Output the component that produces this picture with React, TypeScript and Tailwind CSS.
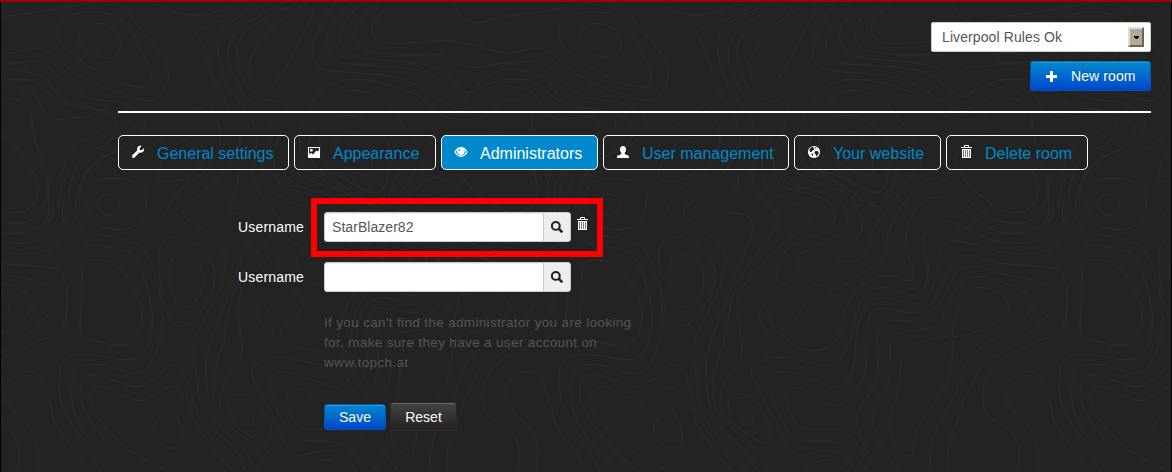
import React from "react";

type Pt = [number, number];

interface Contour {
  dx: number;
  dy: number;
  closed?: boolean;
  d: string;
}

// Contour points are stored at three times their drawn size; the pattern repeats every 1500 units.
const open = (dx: number, dy: number, list: string[]): Contour[] => list.map((d) => ({ dx, dy, d }));
const loops = (dx: number, dy: number, list: string[]): Contour[] =>
  list.map((d) => ({ dx, dy, d, closed: true }));

const contours: Contour[] = [
  ...loops(0, 0, [
    "237,110 255,80 300,71 345,90 362,130 348,165 320,173 275,160 242,135",
    "175,100 182,68 225,42 290,36 350,50 395,95 425,150 452,215 450,250 425,261 370,250 310,225 240,180 188,135",
    "1375,510 1420,570 1500,625 1550,638 1600,615 1612,560 1585,490 1540,430 1505,405 1440,410 1385,440 1365,480",
    "295,612 305,590 327,582 350,592 359,614 350,636 327,645 304,635",
    "255,600 270,555 330,535 400,545 437,572 435,630 410,675 345,688 280,665",
    "475,535 500,460 560,415 595,420 610,460 590,510 540,540",
    "960,440 970,380 1030,345 1100,365 1160,420 1165,520 1140,575 1080,560 990,500",
    "1000,430 1050,395 1100,430 1118,500 1110,525 1050,510 1000,470",
  ]),
  ...open(0, 0, [
    "1180,0 1125,60 1115,100 1140,122 1190,131 1320,122 1400,130 1470,150 1530,159 1580,148 1620,145 1660,165 1720,215 1790,255 1850,275 1900,292 1945,303 1975,290 2002,245 2002,195 1970,145 1920,85 1885,35 1845,10 1800,4 1720,18 1600,38 1500,52 1440,68 1400,60 1370,30 1355,0",
    "1150,0 1080,60 1065,110 1100,150 1200,165 1320,165 1370,190 1430,202 1500,190 1560,188 1610,185 1650,205 1690,245 1740,285 1800,300 1850,305 1900,325 1935,360 1930,395 1900,430 1830,460 1770,500 1735,570 1728,640 1750,690",
    "470,0 520,35 590,45 650,35 725,0",
    "780,0 700,50 620,80 590,100 605,130 625,180 640,235 680,310 710,370 720,420 705,470 680,510",
    "830,0 700,60 655,110 660,190 690,270 750,350 770,430 755,510",
    "870,0 740,70 690,130 690,200 730,280 800,350 820,400 790,460 785,510",
    "905,0 770,70 715,130 720,220 780,290 850,310 865,340 830,430 820,480 840,530 900,570",
    "930,0 820,80 765,150 747,200 760,240 800,265 830,240 870,180 920,80 955,0",
    "1010,0 960,80 937,150 955,200 1020,215 1150,225 1240,250 1320,300 1380,325 1440,310 1500,263 1550,262 1600,280 1630,330 1670,358 1730,352 1780,355 1803,380 1790,400 1720,440 1690,510 1675,600 1650,665",
    "1060,0 990,90 980,140 1010,185 1100,195 1220,205 1300,230 1380,290 1440,265 1490,243 1540,238 1600,245 1660,290 1720,320 1790,330 1840,355 1845,395 1820,430 1750,470 1715,540 1705,620 1680,690",
    "1095,0 1030,70 1020,120 1060,165 1150,180 1250,190 1320,210 1400,277 1440,250 1500,212 1580,215 1640,240 1690,300 1800,330 1870,350 1900,385 1890,420 1850,455 1780,490 1745,560 1735,640",
    "1645,670 1645,560 1625,480 1600,400 1590,330 1560,303 1530,297 1495,315 1450,350 1380,358 1320,340 1240,280 1100,240 1000,250 940,300 905,380 900,450 930,510 1040,580 1120,617",
    "1270,520 1250,440 1200,360 1150,300 1080,273 1020,280 970,330 930,420 935,480 1000,545 1085,590 1125,617",
    "430,450 480,420 560,350 615,315 640,330 660,400 650,460 610,520 540,570 490,650",
  ]),
  ...loops(300, 510, [
    "208,310 215,270 245,253 290,270 312,330 290,390 260,410 225,390",
    "178,290 180,230 210,203 260,208 320,250 345,310 330,380 290,440 245,470 210,450 185,370",
    "1060,498 1068,430 1085,375 1130,353 1190,365 1228,410 1200,450 1130,485",
    "1055,507 980,512 920,530 903,570 895,660 875,730 875,800 905,850 935,855 945,820 960,760 1010,690 1045,620",
  ]),
  ...open(300, 510, [
    "380,0 310,65 250,128 310,180 365,230 375,280 360,350 330,410 290,500 280,550 290,620 300,700 330,770 400,830 440,910",
    "420,0 410,50 387,120 410,130 445,140 458,170 445,220 410,300 380,390 345,480 320,560 320,640 335,720 370,780 430,840 480,910",
    "455,0 470,60 520,120 538,155 510,200 440,290 400,370 385,440 370,520 345,600 340,680 365,745 430,800 480,850 510,910",
    "485,0 500,50 560,90 620,115 638,140 610,175 550,220 480,290 430,350 415,400 420,480 425,550 400,595 370,650 360,700 375,745 440,790 500,840 535,910",
    "515,0 550,50 640,75 690,100 705,140 680,180 600,215 550,250 530,300 540,335 590,365 610,400 590,440 543,480 545,495 590,530 650,542 700,520 725,470 740,410 780,350 850,318 890,322 925,332 942,310 925,260 915,220 930,150 965,100 1010,82 1060,95 1130,150 1190,183 1250,190 1310,175 1350,130 1365,60 1385,0",
    "540,0 590,45 650,65 720,90 743,140 720,190 650,225 600,255 590,280 620,325 690,356 730,345 800,300 850,262 865,190 890,130 945,60 1005,22 1050,40 1110,95 1180,145 1250,160 1310,140 1340,80 1352,0",
    "575,0 640,35 740,70 775,120 785,180 750,225 715,262 730,273 780,265 808,220 825,165 900,70 945,0",
    "610,0 680,20 750,60 800,100 830,110 860,90 895,0",
    "650,0 720,20 780,55 825,68 855,50 865,0",
    "750,0 800,17 817,10 818,0",
    "600,858 570,840 530,760 480,670 455,610 470,580 540,562 640,580 700,585 745,530 765,440 800,370 850,352 890,360 935,377 970,360 985,300 972,240 975,190 1030,155 1080,165 1160,205 1250,220 1320,205 1370,150 1385,60 1405,0",
    "810,910 750,840 700,815 590,805 540,740 512,660 515,620 560,605 640,630 700,650 740,635 765,570 770,480 800,405 850,382 930,403 980,380 1010,310 1020,240 1050,213 1110,220 1190,243 1270,253 1350,235 1382,200 1390,100 1420,20",
    "835,910 760,810 710,778 630,780 590,760 562,700 565,665 600,655 660,690 710,705 750,680 790,620 800,560 800,480 815,425 850,415 930,428 980,415 1020,360 1050,290 1100,255 1200,280 1350,292 1390,320 1403,400 1380,480 1300,520 1200,575 1155,640 1150,700 1170,740 1230,780 1258,840 1255,910",
    "850,910 800,840 770,760 780,710 820,650 835,570 830,490 860,452 940,453 990,430 1030,380 1070,310 1120,288 1200,310 1300,330 1350,355 1360,400 1335,445 1250,520 1160,580 1110,650 1070,760 1045,830 1042,910",
    "900,910 850,840 818,760 830,700 870,620 870,530 900,490 1000,470 1040,420 1070,350 1120,320 1180,330 1260,358 1300,400 1260,460 1160,520 1100,580 1060,680 1005,790 985,910",
    "1312,910 1305,800 1250,735 1215,680 1225,635 1280,604 1320,625 1350,700 1370,770 1430,850 1450,910",
    "1075,0 1120,60 1200,115 1250,128 1300,105 1312,50 1300,0",
    "600,858 690,840 740,865 775,910",
    "605,910 640,882 690,870 745,910",
  ]),
  ...open(0, 708, [
    "700,708 640,640 590,560 560,490 520,454 480,465 430,493 370,480 310,453 275,470 280,520 330,590 400,650 510,708",
    "415,708 330,630 270,550 240,480 250,430 290,415 350,435 410,452 460,430 510,388 545,400 570,460 590,530 640,610 700,660 740,708",
    "370,708 290,640 230,550 213,460 230,400 280,385 340,395 400,412 445,390 480,310 488,230 465,110 430,40 370,10 290,-5",
    "300,708 240,600 190,520 178,430 190,375 240,355 320,362 380,372 430,350 457,260 440,150 400,60 340,35 270,25 235,0",
  ]),
  ...loops(0, 708, [
    "460,580 475,550 513,518 538,560 547,620 520,637 480,620",
    "243,200 250,90 275,73 330,78 380,120 420,200 425,260 400,315 350,328 280,312 243,290",
    "772,210 790,200 808,240 822,285 805,292 780,250",
    "725,545 740,533 760,550 758,568 735,560",
    "685,500 715,472 770,500 810,570 805,618 750,600 700,560",
  ]),
];

function toPath({ dx, dy, closed, d }: Contour): string {
  const p: Pt[] = d.split(" ").map((s) => {
    const [x, y] = s.split(",").map(Number);
    return [x + dx, y + dy];
  });
  const n = p.length;
  const at = (i: number): Pt => (closed ? p[(i + n) % n] : p[Math.max(0, Math.min(n - 1, i))]);
  let out = `M${p[0][0]} ${p[0][1]}`;
  for (let i = 0; i < (closed ? n : n - 1); i++) {
    const [a, b, c, e] = [at(i - 1), at(i), at(i + 1), at(i + 2)];
    out += `C${b[0] + (c[0] - a[0]) / 6} ${b[1] + (c[1] - a[1]) / 6} ${c[0] - (e[0] - b[0]) / 6} ${
      c[1] - (e[1] - b[1]) / 6
    } ${c[0]} ${c[1]}`;
  }
  return out;
}

const terrain = contours.map(toPath).join("");

function Terrain() {
  return (
    <svg
      className="pointer-events-none absolute inset-0 h-full w-full"
      viewBox="0 0 3516 1416"
      fill="none"
      stroke="#2c2c2c"
      strokeWidth="3"
      aria-hidden="true"
    >
      <defs>
        <path id="terrain" d={terrain} />
      </defs>
      <use href="#terrain" x="-1500" />
      <use href="#terrain" />
      <use href="#terrain" x="1500" />
      <use href="#terrain" x="3000" />
    </svg>
  );
}

type IconName = "wrench" | "picture" | "eye" | "user" | "globe" | "trash" | "search" | "plus";

const glyphs: Record<IconName, React.ReactNode> = {
  wrench: (
    <path d="M12.8 3.3 10.7 5.3 9 4.9 8.7 3.3 10.7 1.1C9.2.5 7.5.9 6.7 2.1 6 3.1 6 4.3 6.3 5.3L1.3 10.2C.8 10.8.8 11.8 1.3 12.4 1.9 13.1 3 13.1 3.6 12.5L8.4 7.6C9.7 8 11.2 7.7 12.1 6.7 13 5.8 13.3 4.4 12.8 3.3Z" />
  ),
  picture: (
    <path fillRule="evenodd" d="M1 2h12v11H1ZM2 3v6l1-.6L4.500 8 6 9.400 9.300 5.400 10.600 6.600 12 5V3ZM3 4h2.600v2.600H3Z" />
  ),
  eye: (
    <path
      fillRule="evenodd"
      d="M.3 7.1C1.8 3.8 4.2 2 7 2s5.200 1.800 6.700 5.100C12.200 10.200 9.800 12 7 12S1.800 10.200.3 7.100ZM1.900 7C3 9.400 4.800 10.600 7 10.600S11 9.400 12.100 7C11.600 6 11 5.200 10.200 4.500 10.600 5.100 10.800 5.700 10.800 6.400 10.800 8.500 9.100 10 7 10S3.200 8.500 3.200 6.400C3.200 5.700 3.400 5.100 3.800 4.500 3 5.200 2.400 6 1.900 7ZM5.300 4.300C4.800 5 4.700 5.500 4.800 6.300L5.700 6.300C5.700 5.500 6 5 6.500 4.600Z"
    />
  ),
  user: (
    <path d="M7 1C8.900 1 10 2.300 10 4.200 10 5.600 9.500 6.800 8.800 7.500V9.200L12.200 10.600C12.800 10.900 13 11.500 13 13H1C1 11.500 1.200 10.900 1.800 10.600L5.200 9.200V7.500C4.500 6.800 4 5.600 4 4.200 4 2.300 5.100 1 7 1Z" />
  ),
  globe: (
    <>
      <circle cx="7" cy="7" r="6.1" />
      <path
        fill="#232323"
        d="M3.200 3.300 5 2l1.800.1-.6 1.100 1.200.3-.4 1.200-1.500.7-.3 1.200L3.500 7 2.300 5.900ZM8.200 2.100l1.700.6-.8.9-1-.4ZM8 6.200l2.600-.2 1.300 1.200-.8 2.300-1.700 1.900-.9-2.300-1.300-1ZM4.500 8.200l1.700.9-.3 2.100-1-.6Z"
      />
    </>
  ),
  trash: (
    <>
      <path fillRule="evenodd" d="M6 0h3a1 1 0 0 1 1 1v1h3v1H2V2h3V1a1 1 0 0 1 1-1ZM6 1v1h3V1Z" />
      <path fillRule="evenodd" d="M3 4h9v9H3ZM4 5v7h1V5ZM6 5v7h1V5ZM8 5v7h1V5ZM10 5v7h1V5Z" />
      <path fillOpacity=".4" d="M4 5h1v7H4ZM6 5h1v7H6ZM8 5h1v7H8ZM10 5h1v7h-1Z" />
    </>
  ),
  search: (
    <>
      <circle cx="4.800" cy="5.900" r="3.900" fill="none" stroke="currentColor" strokeWidth="2.100" />
      <path d="m7.700 8.700 3.600 3.600" stroke="currentColor" strokeWidth="2.600" />
    </>
  ),
  plus: <path d="M5 2h3v4h4v3H8v4H5V9H1V6h4Z" />,
};

function Icon({ name, className = "" }: { name: IconName; className?: string }) {
  return (
    <svg
      className={`block h-[14px] w-[14px] shrink-0 ${className}`}
      viewBox="0 0 14 14"
      fill="currentColor"
      aria-hidden="true"
    >
      {glyphs[name]}
    </svg>
  );
}

const tabs: { label: string; icon: IconName; width: string; active?: boolean }[] = [
  { label: "General settings", icon: "wrench", width: "w-[171px]" },
  { label: "Appearance", icon: "picture", width: "w-[142px]" },
  { label: "Administrators", icon: "eye", width: "w-[157px]", active: true },
  { label: "User management", icon: "user", width: "w-[186px]" },
  { label: "Your website", icon: "globe", width: "w-[147px]" },
  { label: "Delete room", icon: "trash", width: "w-[142px]" },
];

function UserField({ value }: { value: string }) {
  return (
    <div className="flex h-[30px] w-[247px]">
      <input
        aria-label="Username"
        defaultValue={value}
        className="h-[30px] w-[220px] rounded-l-[3px] border border-[#ccc] bg-white px-[7px] text-sm tracking-[0.05px] text-[#555] shadow-[inset_0_1px_1px_rgba(0,0,0,0.075)] outline-none"
      />
      <button
        aria-label="Search"
        className="-ml-px flex h-[30px] w-[28px] items-center rounded-r-[3px] border border-[#ccc] bg-[#eee] pl-[7px] text-[#222]"
      >
        <Icon name="search" />
      </button>
    </div>
  );
}

export default function App() {
  return (
    <div className="relative h-[472px] w-[1172px] overflow-hidden bg-[#232323] font-['Liberation_Sans',Arial,sans-serif] text-sm leading-5 text-white">
      <Terrain />
      <div className="relative h-full border-x border-t-2 border-x-black border-t-[#a50000] pl-[117px] pr-5">
        <header className="flex h-[111px] flex-col items-end border-b-2 border-white pt-5">
          <button className="flex h-[30px] w-[220px] items-center justify-between rounded-[2px] border border-[#ccc] bg-white pl-[10px] pr-[6px] text-[#555]">
            <span className="tracking-[0.1px]">Liverpool Rules Ok</span>
            <span className="flex h-5 w-4 items-center justify-center border-2 border-b-[#6e6257] border-l-[#e3dcd3] border-r-[#6e6257] border-t-[#e3dcd3] bg-[#b5a894]">
              <svg className="h-[3px] w-[5px] shrink-0" viewBox="0 0 5 3" aria-hidden="true">
                <path d="M0 0h5v1L3 3H2L0 1Z" />
              </svg>
            </span>
          </button>
          <button className="mt-[9px] flex h-[30px] w-[121px] items-center rounded-[3px] border border-[#0055b8] border-t-[#0072b8] bg-linear-to-b from-[#0088cc] to-[#0044cc] pl-[14px] shadow-[inset_0_1px_0_rgba(255,255,255,0.15)]">
            <Icon name="plus" />
            <span className="ml-3 tracking-[0.1px] [text-shadow:0_-1px_0_rgba(0,0,0,0.25)]">New room</span>
          </button>
        </header>

        <nav className="mt-[22px] flex gap-[5px]">
          {tabs.map((t) => (
            <a
              key={t.label}
              className={`flex h-[35px] shrink-0 items-center whitespace-nowrap rounded-[5px] border border-white pl-3 text-base ${t.width} ${
                t.active ? "bg-[#0088cc] text-white" : "text-[#0088cc]"
              }`}
            >
              <Icon name={t.icon} className="mb-[1px] text-white" />
              <span className="ml-3 pt-[2px]">{t.label}</span>
            </a>
          ))}
        </nav>

        <form className="mt-7 flex flex-col" onSubmit={(e) => e.preventDefault()}>
          <div className="flex h-[59px] items-center">
            <label className="w-[186px] pb-[1px] text-right tracking-[0.18px]">Username</label>
            <div className="ml-[7px] flex h-[59px] w-[292px] border-[6px] border-[#fe0000] pl-[7px] pt-2">
              <UserField value="StarBlazer82" />
              <Icon name="trash" className="ml-[4px] mt-[5px]" />
            </div>
          </div>
          <div className="mt-[5px] flex items-center">
            <label className="mr-5 w-[186px] text-right tracking-[0.18px]">Username</label>
            <UserField value="" />
          </div>
          <p className="ml-[206px] mt-[21px] w-[320px] text-[13.5px] tracking-[0.34px] text-[#555]">
            If you can't find the administrator you are looking for, make sure they have a user account on
            www.topch.at
          </p>
          <div className="ml-[206px] mt-[29px] flex items-center gap-1">
            <button className="h-[26px] w-[62px] rounded-[3px] border border-[#0055b8] bg-linear-to-b from-[#0088cc] to-[#0044cc] leading-6 shadow-[inset_0_1px_0_rgba(255,255,255,0.2)] [text-shadow:0_-1px_0_rgba(0,0,0,0.25)]">
              Save
            </button>
            <button className="h-[29px] w-[67px] rounded-[3px] border border-[#2a2a2a] bg-linear-to-b from-[#444444] to-[#222222] leading-6 shadow-[inset_0_1px_0_rgba(255,255,255,0.2)] [text-shadow:0_-1px_0_rgba(0,0,0,0.25)]">
              Reset
            </button>
          </div>
        </form>
      </div>
    </div>
  );
}
